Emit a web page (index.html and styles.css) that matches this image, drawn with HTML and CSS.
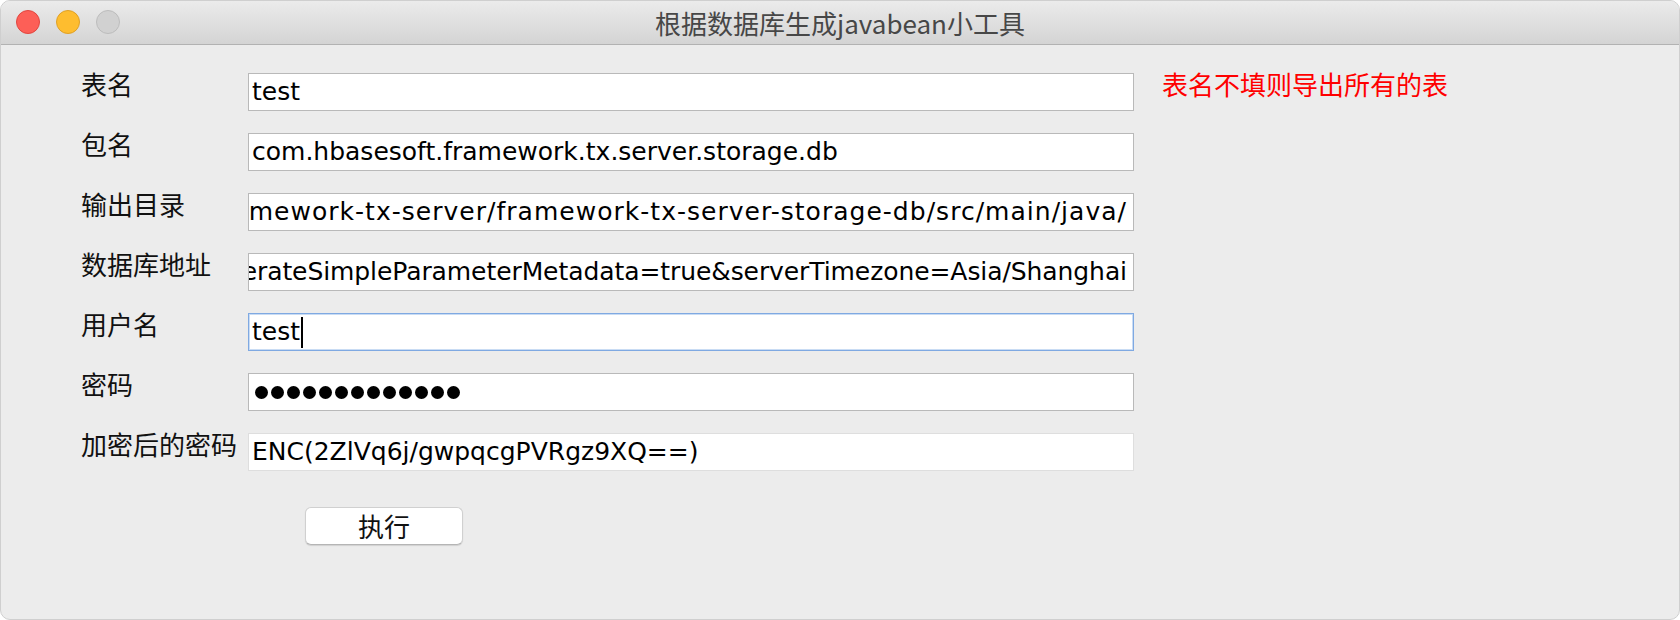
FILE: index.html
```html
<!DOCTYPE html>
<html lang="zh-CN">
<head>
<meta charset="utf-8">
<title>根据数据库生成javabean小工具</title>
<link rel="stylesheet" href="styles.css">
</head>
<body>
<div class="window">
  <div class="titlebar">
    <div class="lights">
      <span class="light red"></span>
      <span class="light yellow"></span>
      <span class="light grey"></span>
    </div>
    <div class="title">根据数据库生成javabean小工具</div>
  </div>
  <div class="content">
    <div class="form">
      <div class="row">
        <div class="label">表名</div>
        <div class="field"><span class="text">test</span></div>
        <div class="hint">表名不填则导出所有的表</div>
      </div>
      <div class="row">
        <div class="label">包名</div>
        <div class="field"><span class="text">com.hbasesoft.framework.tx.server.storage.db</span></div>
      </div>
      <div class="row">
        <div class="label">输出目录</div>
        <div class="field scrolled"><span class="text path">mework-tx-server/framework-tx-server-storage-db/src/main/java/</span></div>
      </div>
      <div class="row">
        <div class="label">数据库地址</div>
        <div class="field scrolled"><span class="text url">nerateSimpleParameterMetadata=true&amp;serverTimezone=Asia/Shanghai</span></div>
      </div>
      <div class="row">
        <div class="label">用户名</div>
        <div class="field focused"><span class="text">test</span><span class="caret"></span></div>
      </div>
      <div class="row">
        <div class="label">密码</div>
        <div class="field">
          <span class="dots">
            <i></i><i></i><i></i><i></i><i></i><i></i><i></i><i></i><i></i><i></i><i></i><i></i><i></i>
          </span>
        </div>
      </div>
      <div class="row">
        <div class="label">加密后的密码</div>
        <div class="field readonly"><span class="text">ENC(2ZlVq6j/gwpqcgPVRgz9XQ==)</span></div>
      </div>
    </div>
    <div class="actions">
      <button class="btn">执行</button>
    </div>
  </div>
</div>
</body>
</html>
```
FILE: styles.css
```css
html, body {
  margin: 0;
  padding: 0;
  background: #ffffff;
}
.window {
  width: 1680px;
  height: 620px;
  box-sizing: border-box;
  background: #ececec;
  border: 1px solid #cfcfcf;
  border-radius: 10px;
  overflow: hidden;
  display: flex;
  flex-direction: column;
}
.titlebar {
  position: relative;
  height: 43px;
  flex: 0 0 auto;
  background: linear-gradient(#ebebeb, #d4d4d4);
  border-bottom: 1px solid #b2b2b2;
  display: flex;
  align-items: center;
  justify-content: center;
}
.lights {
  position: absolute;
  left: 15px;
  top: 9px;
  display: flex;
  gap: 16px;
}
.light {
  width: 24px;
  height: 24px;
  box-sizing: border-box;
  border-radius: 50%;
  display: block;
}
.light.red { background: #fd5f57; border: 1px solid #e1463f; }
.light.yellow { background: #febd2f; border: 1px solid #dfa026; }
.light.grey { background: #d1d1d1; border: 1px solid #bcbcbc; }
.title {
  font-family: "Noto Sans CJK SC", "Noto Sans", sans-serif;
  font-size: 26px;
  line-height: 30px;
  color: #474747;
  margin-top: 1px;
}
.content {
  padding: 26px 0 0 80px;
  display: flex;
  flex-direction: column;
}
.form {
  display: flex;
  flex-direction: column;
  gap: 20px;
}
.row {
  display: flex;
  align-items: flex-start;
}
.label {
  width: 167px;
  flex: 0 0 167px;
  font-family: "Noto Sans CJK SC", sans-serif;
  font-size: 26px;
  line-height: 26px;
  color: #111111;
  white-space: nowrap;
}
.field {
  margin-top: 2px;
  width: 886px;
  height: 38px;
  box-sizing: border-box;
  background: #ffffff;
  border: 1px solid #b9b9b9;
  display: flex;
  align-items: center;
  padding: 0 3px;
  overflow: hidden;
  white-space: nowrap;
  font-family: "DejaVu Sans", "Liberation Sans", sans-serif;
  font-size: 25px;
  color: #000000;
}
.field .text {
  line-height: 36px;
  flex: 0 0 auto;
}
.field .text.path {
  letter-spacing: 1.02px;
}
.field .text.url {
  letter-spacing: -0.08px;
}
.field.scrolled {
  justify-content: flex-end;
  padding: 0 6px 0 0;
}
.field.focused {
  border-color: #7fa9e2;
  box-shadow: inset 0 0 0 1px #c9dcf4;
}
.field.readonly {
  border-color: #dedede;
}
.caret {
  display: inline-block;
  width: 2px;
  height: 31px;
  background: #000;
  margin-left: 1px;
  flex: 0 0 auto;
}
.dots {
  display: flex;
  gap: 3px;
  padding-left: 3px;
}
.dots i {
  display: block;
  width: 13px;
  height: 13px;
  border-radius: 50%;
  background: #000;
}
.hint {
  margin-left: 28px;
  font-family: "Noto Sans CJK SC", sans-serif;
  font-size: 26px;
  line-height: 26px;
  color: #ff0000;
  white-space: nowrap;
}
.actions {
  margin-top: 36px;
  padding-left: 224px;
}
.btn {
  width: 158px;
  height: 38px;
  box-sizing: border-box;
  background: #ffffff;
  border: 1px solid #d0d0d0;
  border-bottom-color: #b5b5b5;
  border-radius: 6px;
  box-shadow: 0 1px 1px rgba(0,0,0,0.12);
  font-family: "Noto Sans CJK SC", sans-serif;
  font-size: 26px;
  line-height: 30px;
  color: #111111;
  padding: 0;
  display: flex;
  align-items: center;
  justify-content: center;
}
```
